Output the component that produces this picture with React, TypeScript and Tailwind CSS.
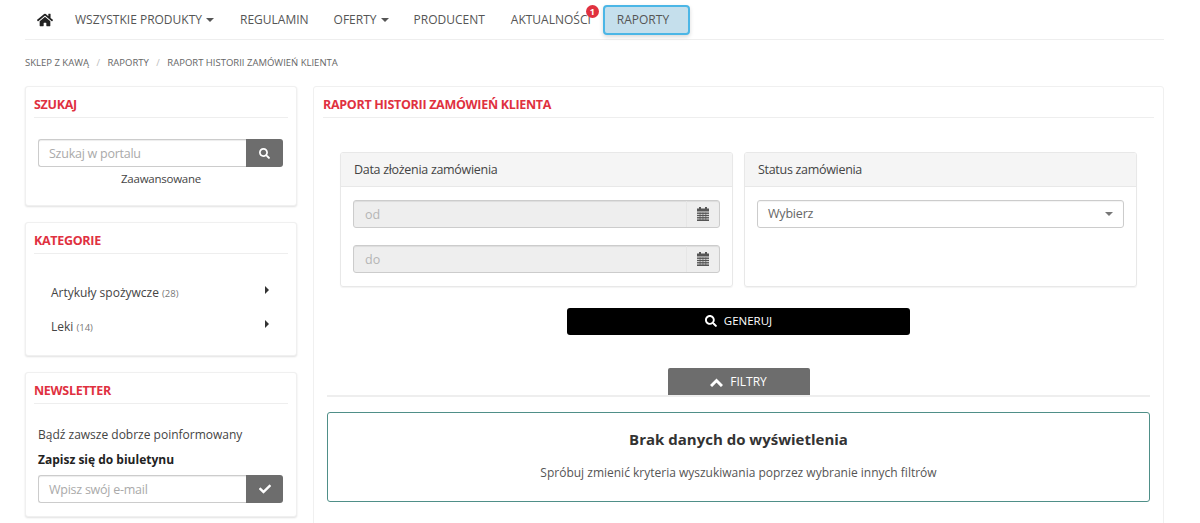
import React from "react";
import { FaHome, FaSearch, FaCheck } from "react-icons/fa";

function Caret({ className = "" }: { className?: string }) {
  return <span className={"inline-block w-0 h-0 border-x-4 border-x-transparent border-t-4 " + className} />;
}

function NavItem({ children, className = "pr-[13px]" }: { children: React.ReactNode; className?: string }) {
  return <a className={"flex items-center gap-1 pl-[13px] h-[39px] text-[#555] whitespace-nowrap " + className}>{children}</a>;
}

function Card({ title, className = "", children }: { title: string; className?: string; children: React.ReactNode }) {
  return (
    <section className={"bg-white rounded-[3px] border border-[#f0f0f0] shadow-[0_1px_2px_rgba(0,0,0,0.12)] px-[8px] " + className}>
      <h2 className="h-[21px] pt-[9px] leading-[18px] text-[12.5px] tracking-[-0.3px] font-bold text-[#e0313f] border-b border-[#eee] box-content">{title}</h2>
      {children}
    </section>
  );
}

function InputGroup({ placeholder, icon }: { placeholder: string; icon: React.ReactNode }) {
  return (
    <div className="flex h-[28px] mx-[4px]">
      <div className="w-[208px] border border-[#ccc] border-r-0 rounded-l-[3px] pl-[10px] leading-[28px] text-[12.5px] tracking-[-0.25px] text-[#aaa] shadow-[inset_0_1px_1px_rgba(0,0,0,0.075)]">{placeholder}</div>
      <div className="w-[37px] bg-[#6d6d6d] rounded-r-[3px] flex items-center justify-center text-white">{icon}</div>
    </div>
  );
}

function CalendarIcon() {
  return (
    <svg width="12" height="14" viewBox="0 0 12 14" fill="#555">
      <rect x="2" y="0" width="2" height="3" />
      <rect x="8" y="0" width="2" height="3" />
      <rect x="0" y="1.5" width="12" height="3" />
      <rect x="0" y="5.5" width="12" height="1.4" />
      <rect x="0" y="7.8" width="12" height="1.4" />
      <rect x="0" y="10.1" width="12" height="1.4" />
      <rect x="0" y="12.4" width="12" height="1.6" />
      <rect x="2.7" y="5.5" width="0.7" height="8" />
      <rect x="5.6" y="5.5" width="0.7" height="8" />
      <rect x="8.5" y="5.5" width="0.7" height="8" />
    </svg>
  );
}

function DateInput({ placeholder }: { placeholder: string }) {
  return (
    <div className="flex h-[28px] bg-[#eeeeee] border border-[#ccc] rounded-[3px] shadow-[inset_0_1px_1px_rgba(0,0,0,0.075)]">
      <div className="flex-1 pl-[11px] leading-[28px] text-[12.5px] text-[#b5b5b5]">{placeholder}</div>
      <div className="w-[33px] border-l border-[#e6e6e6] flex items-center justify-center">
        <CalendarIcon />
      </div>
    </div>
  );
}

function Panel({ title, children }: { title: string; children: React.ReactNode }) {
  return (
    <div className="flex-1 h-[135px] border border-[#e8e8e8] rounded-[3px] overflow-hidden shadow-[0_1px_1px_rgba(0,0,0,0.05)]">
      <div className="h-[34px] bg-[#f5f5f5] border-b border-[#e8e8e8] pl-[13px] leading-[33px] text-[12.5px] tracking-[-0.3px] text-[#444]">{title}</div>
      {children}
    </div>
  );
}

function Arrow() {
  return <span className="mt-[2px] inline-block w-0 h-0 border-y-[4px] border-y-transparent border-l-[4px] border-l-[#333]" />;
}

export default function App() {
  return (
    <div className="w-[1200px] h-[523px] overflow-hidden bg-white text-[#333] text-[13px]" style={{ fontFamily: '"Open Sans", "Noto Sans", sans-serif' }}>
      <div className="mx-[25px] w-[1139px]">
        <nav className="h-[40px] border-b border-[#eee] flex items-center pl-[6px] text-[12px]">
          <a className="flex items-center px-[6px] text-[#222] mr-[3px]"><FaHome size={16} /></a>
          <NavItem>WSZYSTKIE PRODUKTY <Caret className="border-t-[#555]" /></NavItem>
          <NavItem className="pr-[12px]">REGULAMIN</NavItem>
          <NavItem className="pr-[12px]">OFERTY <Caret className="border-t-[#555]" /></NavItem>
          <NavItem>PRODUCENT</NavItem>
          <div className="relative">
            <NavItem>AKTUALNOŚCI</NavItem>
            <span className="absolute top-[5px] right-[5px] w-[13px] h-[13px] rounded-full bg-[#e0313f] text-white text-[9px] font-bold leading-[13px] text-center">1</span>
          </div>
          <a className="ml-[-1px] w-[87px] h-[30px] mt-[1px] pl-[12px] rounded-[4px] bg-[#c5dfec] border-2 border-[#4bb6e6] shadow-[0_2px_4px_rgba(0,0,0,0.15)] leading-[26px] text-[#555]">RAPORTY</a>
        </nav>
        <div className="h-[46px] flex items-center gap-[7.5px] text-[9.5px] text-[#666]">
          <span>SKLEP Z KAWĄ</span><span className="text-[#bbb]">/</span>
          <span>RAPORTY</span><span className="text-[#bbb]">/</span>
          <span>RAPORT HISTORII ZAMÓWIEŃ KLIENTA</span>
        </div>
        <div className="flex gap-[16px] items-start">
          <aside className="w-[272px] flex flex-col gap-[16px]">
            <Card title="SZUKAJ" className="h-[120px]">
              <div className="mt-[21px]" />
              <InputGroup placeholder="Szukaj w portalu" icon={<FaSearch size={11} />} />
              <div className="mt-[4px] text-center text-[11.5px] tracking-[-0.25px] text-[#444] leading-[16px]">Zaawansowane</div>
            </Card>
            <Card title="KATEGORIE" className="h-[134px]">
              <ul className="mt-[30px] pl-[17px] pr-[19px] text-[12px] text-[#444]">
                <li className="h-[34px] flex justify-between"><span>Artykuły spożywcze <span className="text-[9.5px] text-[#777]">(28)</span></span><Arrow /></li>
                <li className="h-[34px] flex justify-between"><span>Leki <span className="text-[9.5px] text-[#777]">(14)</span></span><Arrow /></li>
              </ul>
            </Card>
            <Card title="NEWSLETTER" className="h-[145px]">
              <p className="mt-[21px] mx-[4px] leading-[20px] text-[12px] text-[#444]">Bądź zawsze dobrze poinformowany</p>
              <p className="mt-[5px] mx-[4px] leading-[20px] text-[12px] font-bold text-[#222]">Zapisz się do biuletynu</p>
              <div className="mt-[5px]"><InputGroup placeholder="Wpisz swój e-mail" icon={<FaCheck size={12} />} /></div>
            </Card>
          </aside>
          <main className="w-[851px] h-[440px] border border-[#f0f0f0] rounded-[3px] px-[9px]">
            <h1 className="h-[21px] pt-[9px] box-content leading-[18px] text-[12.5px] tracking-[-0.3px] font-bold text-[#e0313f] border-b border-[#eee]">RAPORT HISTORII ZAMÓWIEŃ KLIENTA</h1>
            <div className="mt-[34px] mx-[17px] flex gap-[11px]">
              <Panel title="Data złożenia zamówienia">
                <div className="px-[12px] pt-[13px] flex flex-col gap-[17px]">
                  <DateInput placeholder="od" />
                  <DateInput placeholder="do" />
                </div>
              </Panel>
              <Panel title="Status zamówienia">
                <div className="px-[12px] pt-[13px]">
                  <div className="h-[28px] border border-[#ccc] rounded-[3px] pl-[10px] pr-[10px] flex items-center justify-between text-[12.5px] tracking-[-0.2px] text-[#666] shadow-[inset_0_1px_1px_rgba(0,0,0,0.05)]">
                    Wybierz <Caret className="border-t-[#777]" />
                  </div>
                </div>
              </Panel>
            </div>
            <div className="mt-[21px] mx-auto w-[343px] h-[27px] pb-[1px] bg-black rounded-[3px] text-white text-[11.5px] flex items-center justify-center gap-[7px]">
              <FaSearch size={12} /> GENERUJ
            </div>
            <div className="mt-[33px] mx-[4px] h-[27px] border-b-2 border-[#eee] box-content flex justify-center">
              <div className="w-[142px] h-[27px] pt-[1px] bg-[#6d6d6d] rounded-t-[2px] text-white text-[12px] flex items-center justify-center gap-[7px]">
                <svg width="13" height="9" viewBox="0 0 13 9" fill="none" stroke="white" strokeWidth="3"><path d="M1 8 L6.5 2.5 L12 8" /></svg> FILTRY
              </div>
            </div>
            <div className="mt-[15px] mx-[4px] h-[90px] border border-[#4f8f88] rounded-[3px] flex flex-col items-center">
              <div className="mt-[15px] text-[15px] font-bold text-[#333] leading-[22px]">Brak danych do wyświetlenia</div>
              <div className="mt-[14px] text-[12px] text-[#555] leading-[18px]">Spróbuj zmienić kryteria wyszukiwania poprzez wybranie innych filtrów</div>
            </div>
          </main>
        </div>
      </div>
    </div>
  );
}
